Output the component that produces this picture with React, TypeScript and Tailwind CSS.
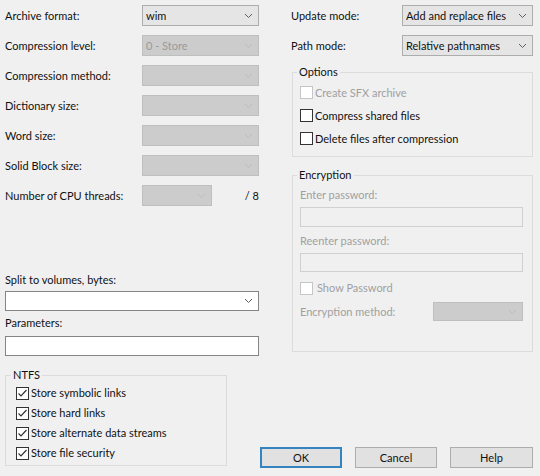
import React from "react";

const Chevron = ({ disabled }: { disabled?: boolean }) => (
  <svg width="9" height="6" viewBox="0 0 9 6" className="shrink-0">
    <path d="M1 1 L4.5 4.5 L8 1" fill="none" stroke={disabled ? "#bdbdbd" : "#5f5f5f"} strokeWidth="1" />
  </svg>
);

function Combo({ value, disabled, className }: { value?: string; disabled?: boolean; className: string }) {
  return (
    <div
      className={
        "flex items-center justify-between border pl-[3px] pr-[5px] " +
        (disabled ? "bg-[#cccccc] border-[#bfbfbf] text-[#9a9a9a] " : "bg-[#e5e5e5] border-[#adadad] text-[#111] ") +
        className
      }
    >
      <span className="truncate">{value ?? ""}</span>
      <Chevron disabled={disabled} />
    </div>
  );
}

function Check({ label, checked, disabled, rowClass, textClass }: { label: string; checked?: boolean; disabled?: boolean; rowClass: string; textClass?: string }) {
  return (
    <div className={"flex items-center " + rowClass}>
      <span
        className={
          "w-[13px] h-[13px] border bg-white flex items-center justify-center shrink-0 " +
          (disabled ? "border-[#c6c6c6]" : "border-[#333333]")
        }
      >
        {checked && (
          <svg width="11" height="11" viewBox="0 0 11 11">
            <path d="M1.5 5.5 L4 8 L9.5 2" fill="none" stroke="#333" strokeWidth="1.2" />
          </svg>
        )}
      </span>
      <span className={(textClass ?? "ml-[2px] ") + (disabled ? "text-[#a0a0a0]" : "text-[#111]")}>{label}</span>
    </div>
  );
}

const LeftRow = ({ label, children }: { label: string; children: React.ReactNode }) => (
  <div className="flex items-center justify-between h-[21px]">
    <span>{label}</span>
    {children}
  </div>
);

export default function App() {
  return (
    <div className="w-[540px] h-[476px] bg-[#f0f0f0] text-[11px] leading-[14px] text-[#111] font-['Lato',sans-serif] overflow-hidden pt-[5px]">
      <div className="flex">
        {/* Left column */}
        <div className="ml-[5px] w-[254px] flex flex-col">
          <div className="flex flex-col gap-[9px]">
            <LeftRow label="Archive format:">
              <Combo value="wim" className="w-[117px] h-[21px]" />
            </LeftRow>
            <LeftRow label="Compression level:">
              <Combo value="0 - Store" disabled className="w-[117px] h-[21px]" />
            </LeftRow>
            <LeftRow label="Compression method:">
              <Combo disabled className="w-[117px] h-[21px]" />
            </LeftRow>
            <LeftRow label="Dictionary size:">
              <Combo disabled className="w-[117px] h-[21px]" />
            </LeftRow>
            <LeftRow label="Word size:">
              <Combo disabled className="w-[117px] h-[21px]" />
            </LeftRow>
            <LeftRow label="Solid Block size:">
              <Combo disabled className="w-[117px] h-[21px]" />
            </LeftRow>
            <div className="flex items-center h-[21px]">
              <span className="w-[137px]">Number of CPU threads:</span>
              <Combo disabled className="w-[70px] h-[21px]" />
              <span className="ml-auto">/ 8</span>
            </div>
          </div>
          <div className="mt-[67px] h-[14px]">Split to volumes, bytes:</div>
          <div className="mt-[4px] h-[20px] bg-white border border-[#858585] flex items-center justify-end pr-[5px]">
            <Chevron />
          </div>
          <div className="mt-[5px] h-[14px]">Parameters:</div>
          <div className="mt-[6px] h-[20px] bg-white border border-[#858585]" />
        </div>

        {/* Right column */}
        <div className="ml-[32px] w-[242px] flex flex-col">
          <div className="flex items-center justify-between h-[21px]">
            <span>Update mode:</span>
            <Combo value="Add and replace files" className="w-[131px] h-[21px]" />
          </div>
          <div className="flex items-center justify-between h-[21px] mt-[9px]">
            <span>Path mode:</span>
            <Combo value="Relative pathnames" className="w-[131px] h-[21px]" />
          </div>

          <fieldset className="mt-[9px] ml-[1px] border border-[#dcdcdc]">
            <legend className="ml-[4px] px-[2px] leading-[14px]">Options</legend>
            <div className="pl-[7px] pt-[2px] pb-[6px]">
              <Check label="Create SFX archive" disabled rowClass="h-[23px]" />
              <Check label="Compress shared files" rowClass="h-[23px]" />
              <Check label="Delete files after compression" rowClass="h-[23px]" />
            </div>
          </fieldset>

          <fieldset className="mt-[11px] ml-[1px] border border-[#dcdcdc]">
            <legend className="ml-[4px] px-[2px] leading-[14px]">Encryption</legend>
            <div className="pl-[7px] pr-[9px] pb-[30px]">
              <div className="mt-[6px] h-[14px] text-[#a0a0a0]">Enter password:</div>
              <div className="mt-[5px] h-[20px] border border-[#d0d0d0]" />
              <div className="mt-[7px] h-[14px] text-[#a0a0a0]">Reenter password:</div>
              <div className="mt-[5px] h-[19px] border border-[#d0d0d0]" />
              <div className="mt-[9px]">
                <Check label="Show Password" disabled rowClass="h-[14px]" textClass="ml-[4px] " />
              </div>
              <div className="mt-[7px] h-[19px] flex items-center justify-between">
                <span className="text-[#a0a0a0]">Encryption method:</span>
                <Combo disabled className="w-[90px] h-[19px]" />
              </div>
            </div>
          </fieldset>
        </div>
      </div>

      {/* Bottom row */}
      <div className="flex items-end mt-[12px]">
        <fieldset className="ml-[5px] w-[222px] border border-[#dcdcdc] mb-[2px]">
          <legend className="ml-[5px] px-[2px] leading-[14px]">NTFS</legend>
          <div className="pl-[10px] pt-[1px] pb-[2px]">
            <Check label="Store symbolic links" checked rowClass="h-[20px]" />
            <Check label="Store hard links" checked rowClass="h-[20px]" />
            <Check label="Store alternate data streams" checked rowClass="h-[20px]" />
            <Check label="Store file security" checked rowClass="h-[20px]" />
          </div>
        </fieldset>
        <div className="ml-[33px] flex gap-[13px]">
          <button className="w-[82px] h-[21px] bg-[#e1e1e1] border-2 border-[#3584bf] flex items-center justify-center">OK</button>
          <button className="w-[82px] h-[21px] bg-[#e1e1e1] border border-[#adadad] flex items-center justify-center">Cancel</button>
          <button className="w-[83px] h-[21px] bg-[#e1e1e1] border border-[#adadad] flex items-center justify-center">Help</button>
        </div>
      </div>
    </div>
  );
}
